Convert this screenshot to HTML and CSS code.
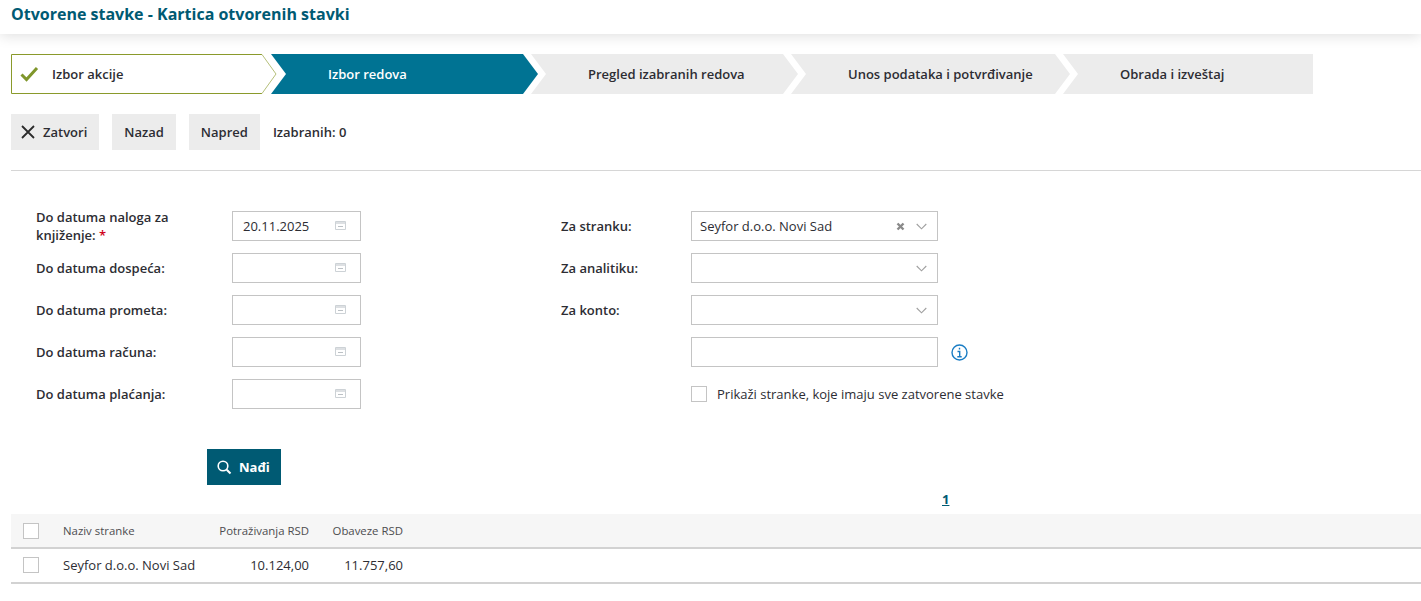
FILE: index.html
```html
<!DOCTYPE html>
<html lang="sr">
<head>
<meta charset="utf-8">
<title>Otvorene stavke</title>
<link rel="stylesheet" href="styles.css">
</head>
<body>
<header class="topbar"><h1 class="title">Otvorene stavke - Kartica otvorenih stavki</h1></header>
<main class="content">
  <ol class="steps">
    <li class="step step-done">
      <svg class="step-outline" width="266" height="40" viewBox="0 0 266 40"><path d="M251 .5H.5v39H251" fill="none" stroke="#8a9a2b"/><path d="M251 .5l14 19.500-14 19.500" fill="none" stroke="#b5bf7a"/></svg>
      <svg class="step-check" width="20" height="16" viewBox="0 0 20 16"><path d="M2.500 8.500l5 5L18 2" fill="none" stroke="#7f962b" stroke-width="3"/></svg>
      <span class="step-text">Izbor akcije</span>
    </li>
    <li class="step step-active"><span class="step-text">Izbor redova</span></li>
    <li class="step"><span class="step-text">Pregled izabranih redova</span></li>
    <li class="step step-long"><span class="step-text">Unos podataka i potvrđivanje</span></li>
    <li class="step step-last"><span class="step-text">Obrada i izveštaj</span></li>
  </ol>

  <div class="toolbar">
    <button class="btn btn-close" type="button">
      <svg width="14" height="14" viewBox="0 0 14 14"><path d="M1 1l12 12M13 1L1 13" stroke="#2b2b2b" stroke-width="1.800" fill="none"/></svg>
      Zatvori
    </button>
    <button class="btn" type="button">Nazad</button>
    <button class="btn" type="button">Napred</button>
    <span class="count">Izabranih: 0</span>
  </div>

  <form class="form">
    <label class="label">Do datuma naloga za knjiženje: <em class="req">*</em></label>
    <div class="field"><span class="value">20.11.2025</span><svg class="cal" width="12" height="11" viewBox="0 0 12 11"><use href="#cal"/></svg></div>
    <label class="label label-right">Za stranku:</label>
    <div class="field field-wide"><span class="value">Seyfor d.o.o. Novi Sad</span>
      <svg class="clear" width="9" height="9" viewBox="0 0 9 9"><path d="M1.500 1.500l6 6M7.500 1.500l-6 6" stroke="#8a8a8a" stroke-width="2.400" fill="none"/></svg>
      <svg class="chev" width="11" height="7" viewBox="0 0 11 7"><use href="#chev"/></svg></div>

    <label class="label">Do datuma dospeća:</label>
    <div class="field"><svg class="cal" width="12" height="11" viewBox="0 0 12 11"><use href="#cal"/></svg></div>
    <label class="label label-right">Za analitiku:</label>
    <div class="field field-wide"><svg class="chev" width="11" height="7" viewBox="0 0 11 7"><use href="#chev"/></svg></div>

    <label class="label">Do datuma prometa:</label>
    <div class="field"><svg class="cal" width="12" height="11" viewBox="0 0 12 11"><use href="#cal"/></svg></div>
    <label class="label label-right">Za konto:</label>
    <div class="field field-wide"><svg class="chev" width="11" height="7" viewBox="0 0 11 7"><use href="#chev"/></svg></div>

    <label class="label">Do datuma računa:</label>
    <div class="field"><svg class="cal" width="12" height="11" viewBox="0 0 12 11"><use href="#cal"/></svg></div>
    <div class="field field-wide"></div>
    <svg class="info" width="17" height="17" viewBox="0 0 17 17"><circle cx="8.500" cy="8.500" r="7.500" fill="none" stroke="#1a7dc4" stroke-width="1.400"/><path d="M8.500 3.800v1.800M6.500 7.500h2.200v5M6.300 12.700h4.400" fill="none" stroke="#1a7dc4" stroke-width="1.400"/></svg>

    <label class="label">Do datuma plaćanja:</label>
    <div class="field"><svg class="cal" width="12" height="11" viewBox="0 0 12 11"><use href="#cal"/></svg></div>
    <div class="check-row"><span class="box"></span><span class="check-text">Prikaži stranke, koje imaju sve zatvorene stavke</span></div>
  </form>

  <div class="search-row">
    <button class="btn-search" type="button">
      <svg width="15" height="15" viewBox="0 0 15 15"><circle cx="6" cy="6" r="4.800" fill="none" stroke="#fff" stroke-width="1.600"/><path d="M9.700 9.700l3.800 3.800" stroke="#fff" stroke-width="2" fill="none"/></svg>
      Nađi
    </button>
  </div>

  <div class="pager"><a class="page" href="#">1</a></div>

  <div class="table">
    <div class="row row-head">
      <span class="box"></span>
      <span class="cell-name">Naziv stranke</span>
      <span class="cell-a">Potraživanja RSD</span>
      <span class="cell-b">Obaveze RSD</span>
    </div>
    <div class="row row-body">
      <span class="box"></span>
      <span class="cell-name">Seyfor d.o.o. Novi Sad</span>
      <span class="cell-a">10.124,00</span>
      <span class="cell-b">11.757,60</span>
    </div>
  </div>
</main>
<svg class="defs" width="0" height="0">
  <defs>
    <g id="cal"><path d="M.5 1.500h10v8H.5z" fill="none" stroke="#cdd2d6"/><path d="M1 2h9v2H1z" fill="#dde0e3"/><path d="M3 6.500h5" stroke="#bcc1c5" fill="none"/></g>
    <path id="chev" d="M.7 1l4.800 4.800L10.300 1" fill="none" stroke="#a0a0a0" stroke-width="1.100"/>
  </defs>
</svg>
</body>
</html>
```

FILE: styles.css
```css
* { box-sizing: border-box; }
html, body { margin: 0; padding: 0; background: #fff; }
body {
  font-family: "Open Sans", "Liberation Sans", sans-serif;
  font-size: 13px;
  color: #2d2d33;
  height: 601px;
  overflow: hidden;
}
.topbar {
  height: 34px;
  background: #fff;
  box-shadow: 0 2px 14px rgba(0, 0, 0, .13);
  padding: 0 11px;
  position: relative;
}
.title {
  margin: 0;
  font-size: 16px;
  line-height: 28px;
  font-weight: 700;
  color: #005a73;
}
.content { padding: 20px 0 0 11px; }

.steps {
  list-style: none;
  margin: 0;
  padding: 0;
  display: flex;
  height: 40px;
}
.step {
  position: relative;
  height: 40px;
  display: flex;
  align-items: center;
  padding-left: 57px;
  background: #ececec;
  font-weight: 600;
  width: 267px;
  margin-left: -7px;
  clip-path: polygon(0 0, calc(100% - 15px) 0, 100% 50%, calc(100% - 15px) 100%, 0 100%, 15px 50%);
}
.step-done {
  width: 266px;
  margin-left: 0;
  padding-left: 41px;
  background: none;
  clip-path: none;
}
.step-outline { position: absolute; left: 0; top: 0; }
.step-check { position: absolute; left: 8px; top: 12px; }
.step-text { position: relative; }
.step-active { margin-left: -6px; background: #007393; color: #fff; }
.step-long { width: 279px; }
.step-last {
  width: 250px;
  clip-path: polygon(0 0, 100% 0, 100% 100%, 0 100%, 15px 50%);
}

.toolbar {
  display: flex;
  align-items: center;
  gap: 13px;
  margin-top: 20px;
  height: 36px;
}
.btn {
  height: 36px;
  border: 0;
  background: #ececec;
  font: 600 13px "Open Sans", "Liberation Sans", sans-serif;
  color: #2d2d33;
  padding: 0 12px;
  display: flex;
  align-items: center;
}
.btn-close { gap: 8px; padding: 0 12px 0 10px; }
.count { font-weight: 600; }

.form {
  margin-top: 20px;
  border-top: 1px solid #d6d6d6;
  padding: 40px 0 0 25px;
  display: grid;
  grid-template-columns: 196px 129px 200px 130px 247px 1fr;
  grid-auto-rows: 30px;
  row-gap: 12px;
  align-items: center;
}
.label { grid-column: 1; font-weight: 600; line-height: 18px; padding-right: 26px; }
.label-right { grid-column: 4; padding-right: 0; }
.req { font-style: normal; color: #d0021b; }
.field {
  grid-column: 2;
  height: 30px;
  border: 1px solid #c4c4c4;
  background: #fff;
  display: flex;
  align-items: center;
  padding-left: 10px;
  position: relative;
}
.field-wide { grid-column: 5; padding-left: 8px; }
.value { flex: 1; }
.cal { position: absolute; right: 13px; top: 8px; }
.chev { position: absolute; right: 10px; top: 11px; }
.clear { position: absolute; right: 32px; top: 10px; }
.info { grid-column: 6; margin-left: 13px; }
.check-row { grid-column: 5 / 7; display: flex; align-items: center; gap: 10px; }
.box {
  width: 16px;
  height: 16px;
  border: 1px solid #c4c4c4;
  background: #fff;
  flex: none;
}

.search-row { margin-top: 40px; padding-left: 196px; }
.btn-search {
  width: 74px;
  height: 36px;
  border: 0;
  background: #005a73;
  color: #fff;
  font: 700 13px "Open Sans", "Liberation Sans", sans-serif;
  display: flex;
  align-items: center;
  gap: 7px;
  padding: 0 0 0 10px;
}

.pager { height: 29px; padding: 0 0 2px 931px; display: flex; align-items: center; }
.page { color: #005a73; font-weight: 700; font-size: 13px; }

.row {
  display: flex;
  align-items: center;
  padding-left: 12px;
  height: 35px;
  border-bottom: 2px solid #d2d2d2;
}
.row-head { background: #f6f6f6; font-size: 11.400px; color: #4d4d50; white-space: nowrap; }
.row-body { padding-bottom: 1px; }
.cell-name { flex: none; width: 152px; margin-left: 24px; }
.cell-a { flex: none; width: 94px; text-align: right; }
.cell-b { flex: none; width: 94px; text-align: right; }
.defs { position: absolute; }
```
